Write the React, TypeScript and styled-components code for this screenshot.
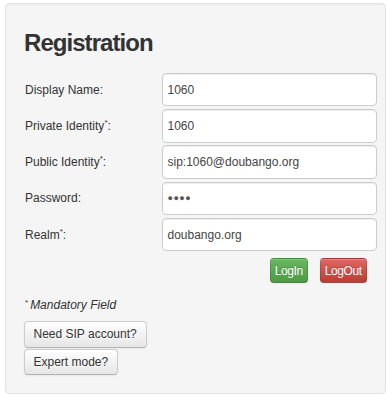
import React from "react";
import styled, { createGlobalStyle } from "styled-components";

const Global = createGlobalStyle`
  html, body { margin: 0; padding: 0; background: #ffffff; }
  body { font-family: "Liberation Sans", Arial, Helvetica, sans-serif; color: #333333; }
  * { box-sizing: border-box; }
`;

const Panel = styled.div`
  margin: 3px 0 0 5px;
  width: 381px;
  height: 391px;
  background: #f5f5f5;
  border: 1px solid #e3e3e3;
  border-radius: 4px;
  box-shadow: inset 0 1px 1px rgba(0, 0, 0, 0.05);
  padding: 26.7px 8px 0 18px;
  display: flex;
  flex-direction: column;
`;

const Title = styled.h2`
  margin: 0;
  font-size: 24px;
  line-height: 24px;
  font-weight: bold;
  letter-spacing: -0.95px;
  color: #333333;
`;

const Form = styled.div`
  margin-top: 18.3px;
  display: flex;
  flex-direction: column;
  gap: 2.75px;
`;

const Row = styled.div`
  display: grid;
  grid-template-columns: 138px 215px;
  align-items: center;
  height: 33.5px;
`;

const Label = styled.label`
  font-size: 12px;
  color: #333333;
  padding-left: 1px;
`;

const Star = styled.sup`
  font-size: 8px;
  line-height: 0;
  vertical-align: 5px;
`;

const Input = styled.div`
  height: 100%;
  background: #ffffff;
  border: 1px solid #cccccc;
  border-radius: 4px;
  box-shadow: inset 0 1px 1px rgba(0, 0, 0, 0.075);
  display: flex;
  align-items: center;
  padding-left: 4.5px;
  font-size: 12px;
  color: #444444;
`;

const Dots = styled.span`
  font-size: 9px;
  letter-spacing: 0.5px;
  color: #555555;
`;

const Actions = styled.div`
  margin-top: 6.8px;
  display: flex;
  justify-content: flex-end;
  gap: 11.5px;
  padding-right: 10px;
`;

const ColorButton = styled.button<{ $tone: "green" | "red" }>`
  height: 25px;
  width: ${(p) => (p.$tone === "green" ? "38.5px" : "47.5px")};
  padding: 0;
  text-align: center;
  font-family: "Liberation Sans", Arial, sans-serif;
  font-size: 12px;
  letter-spacing: -0.4px;
  color: #ffffff;
  border-radius: 4px;
  border: 1px solid rgba(0, 0, 0, 0.12);
  border-bottom-color: rgba(0, 0, 0, 0.28);
  text-shadow: 0 -1px 0 rgba(0, 0, 0, 0.2);
  box-shadow: inset 0 1px 0 rgba(255, 255, 255, 0.2), 0 1px 2px rgba(0, 0, 0, 0.05);
  background: ${(p) =>
    p.$tone === "green"
      ? "linear-gradient(#69b660, #4f9a45)"
      : "linear-gradient(#de6862, #bd3c35)"};
`;

const Note = styled.div`
  margin-top: 14.5px;
  font-size: 12px;
  font-style: italic;
  color: #333333;
  padding-left: 1px;
`;

const NoteStar = styled.sup`
  font-style: normal;
  font-size: 8px;
  line-height: 0;
  vertical-align: 4px;
  margin-right: 2px;
`;

const Extras = styled.div`
  margin-top: 9.5px;
  display: flex;
  flex-direction: column;
  align-items: flex-start;
  gap: 1.5px;
`;

const PlainButton = styled.button`
  height: 26.3px;
  padding: 0 9px 0 8.5px;
  font-family: "Liberation Sans", Arial, sans-serif;
  font-size: 12px;
  color: #333333;
  border-radius: 4px;
  border: 1px solid #cccccc;
  border-bottom-color: #b3b3b3;
  background: linear-gradient(#ffffff, #e6e6e6);
  box-shadow: inset 0 1px 0 rgba(255, 255, 255, 0.2), 0 1px 2px rgba(0, 0, 0, 0.05);
  text-shadow: 0 1px 1px rgba(255, 255, 255, 0.75);
`;

const fields: { label: string; star?: boolean; value: string; secret?: boolean }[] = [
  { label: "Display Name:", value: "1060" },
  { label: "Private Identity", star: true, value: "1060" },
  { label: "Public Identity", star: true, value: "sip:1060@doubango.org" },
  { label: "Password:", value: "●●●●", secret: true },
  { label: "Realm", star: true, value: "doubango.org" },
];

export default function App() {
  return (
    <>
      <Global />
      <Panel>
        <Title>Registration</Title>
        <Form>
          {fields.map((f) => (
            <Row key={f.label}>
              <Label>
                {f.label}
                {f.star && (
                  <>
                    <Star>*</Star>:
                  </>
                )}
              </Label>
              <Input>{f.secret ? <Dots>{f.value}</Dots> : f.value}</Input>
            </Row>
          ))}
        </Form>
        <Actions>
          <ColorButton $tone="green">LogIn</ColorButton>
          <ColorButton $tone="red">LogOut</ColorButton>
        </Actions>
        <Note>
          <NoteStar>*</NoteStar>Mandatory Field
        </Note>
        <Extras>
          <PlainButton>Need SIP account?</PlainButton>
          <PlainButton>Expert mode?</PlainButton>
        </Extras>
      </Panel>
    </>
  );
}
